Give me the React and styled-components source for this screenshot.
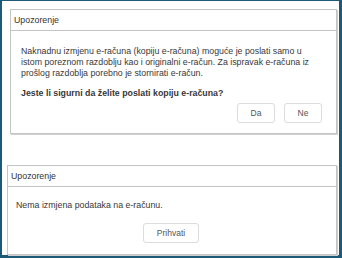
import React from "react";
import styled, { createGlobalStyle } from "styled-components";

const Global = createGlobalStyle`
  html, body { margin: 0; padding: 0; background: #fff; }
  body { font-family: "Liberation Sans", Arial, sans-serif; }
`;

const Frame = styled.div`
  box-sizing: border-box;
  width: 342px;
  height: 258px;
  border-style: solid;
  border-color: #1d5a78;
  border-width: 1px 3px 3px 2px;
  background: #fff;
  display: flex;
  flex-direction: column;
  padding: 8px 1px 0 5px;
`;

const Dialog = styled.div`
  box-sizing: border-box;
  margin-left: ${(p) => p.$indent}px;
  height: ${(p) => p.$h}px;
  border: 1px solid #c4c4c4;
  box-shadow: 1px 1px 0 #d0d0d0;
  margin-right: 1px;
  display: flex;
  flex-direction: column;
  color: #333;
`;

const Header = styled.div`
  box-sizing: border-box;
  height: 21px;
  border-bottom: 1px solid #c4c4c4;
  padding: 0 0 0 3px;
  display: flex;
  align-items: center;
  font-size: 8.8px;
  color: #333;
`;

const Body = styled.div`
  flex: 1;
  display: flex;
  flex-direction: column;
  padding: ${(p) => p.$pad};
`;

const Text = styled.p`
  margin: 0;
  font-size: 8.8px;
  line-height: 11px;
  color: #383838;
`;

const Question = styled(Text)`
  font-weight: bold;
  margin-top: 9px;
`;

const Buttons = styled.div`
  display: flex;
  justify-content: ${(p) => p.$justify};
  gap: 9px;
  margin-top: ${(p) => p.$mt}px;
`;

const Button = styled.button`
  box-sizing: border-box;
  width: ${(p) => p.$w}px;
  height: 20px;
  padding: 0;
  background: #fff;
  border: 1px solid #dcdcdc;
  border-radius: 3px;
  font-family: "Liberation Sans", Arial, sans-serif;
  font-size: 8.5px;
  color: #555;
`;

const Gap = styled.div`
  height: 31px;
  flex: none;
`;

export default function App() {
  return (
    <>
      <Global />
      <Frame>
        <Dialog $indent={3} $h={125}>
          <Header>Upozorenje</Header>
          <Body $pad="15px 14px 0 10px">
            <Text>
              Naknadnu izmjenu e-računa (kopiju e-računa) moguće je poslati samo u
              istom poreznom razdoblju kao i originalni e-račun. Za ispravak e-računa iz
              prošlog razdoblja porebno je stornirati e-račun.
            </Text>
            <Question>Jeste li sigurni da želite poslati kopiju e-računa?</Question>
            <Buttons $justify="flex-end" $mt={4}>
              <Button $w={38}>Da</Button>
              <Button $w={38}>Ne</Button>
            </Buttons>
          </Body>
        </Dialog>
        <Gap />
        <Dialog $indent={0} $h={90}>
          <Header>Upozorenje</Header>
          <Body $pad="13px 10px 0 8px">
            <Text>Nema izmjena podataka na e-računu.</Text>
            <Buttons $justify="center" $mt={12}>
              <Button $w={56}>Prihvati</Button>
            </Buttons>
          </Body>
        </Dialog>
      </Frame>
    </>
  );
}
